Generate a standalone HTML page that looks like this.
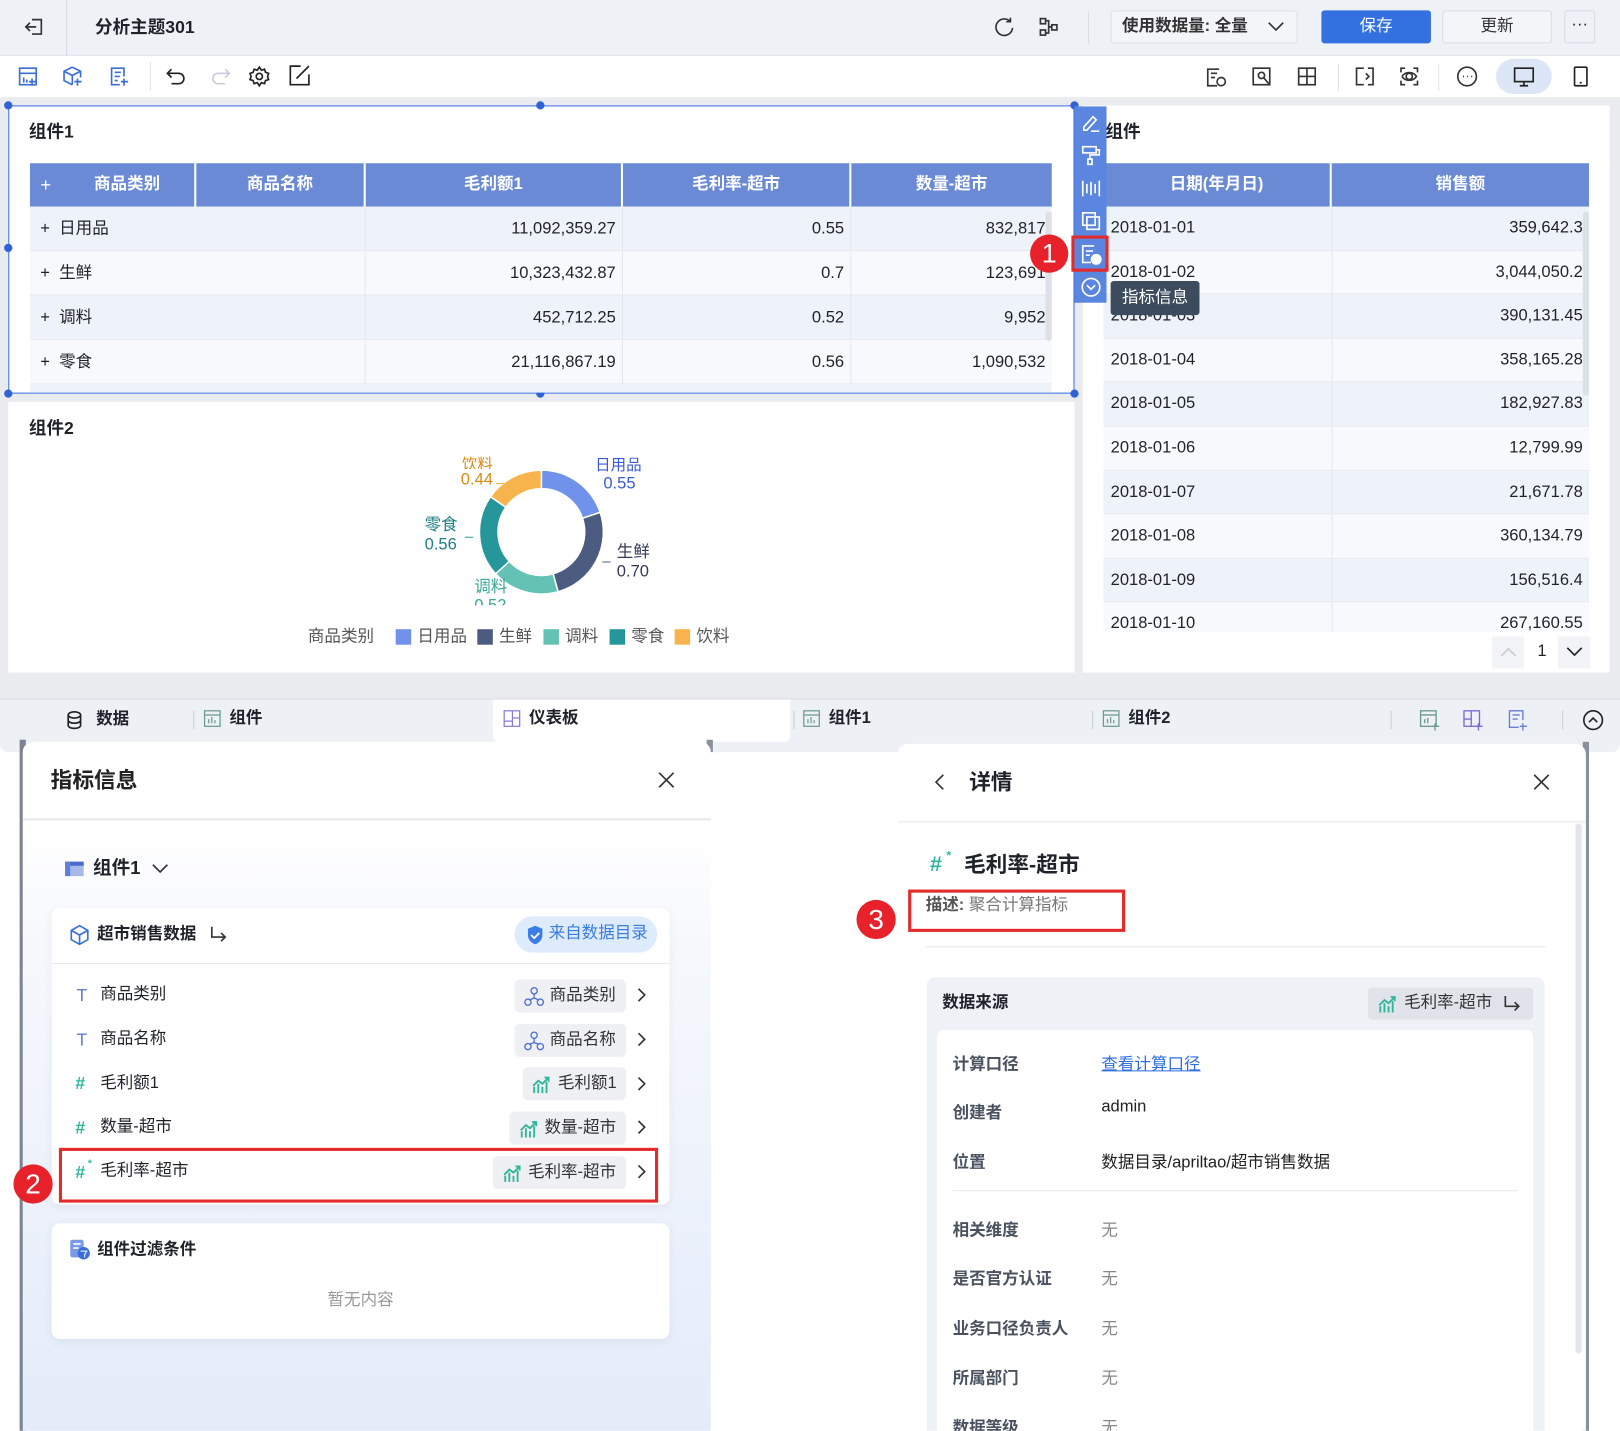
<!DOCTYPE html>
<html><head><meta charset="utf-8"><style>
*{box-sizing:border-box;margin:0;padding:0}
html,body{width:1620px;height:1431px;overflow:hidden;background:#fff}
body{font-family:"Liberation Sans","Noto Sans CJK SC",sans-serif;color:#1f2329}
#w{position:absolute;left:0;top:0;width:1568px;height:1385px;transform:scale(1.03316);transform-origin:0 0;overflow:hidden;background:#fff}
.a{position:absolute}
.t{position:absolute;white-space:nowrap;line-height:1}
.b{font-weight:bold}
.ic{position:absolute;fill:none;stroke:#3a6fd8;stroke-width:1.6}
.z{z-index:5}
.row{position:absolute;left:29px;width:989px;height:43px;border-bottom:1px solid #e6eaf0}
.cell{position:absolute;top:0;height:100%;border-right:1px solid #e3e8f0;font-size:16px;line-height:43px;padding:0 6px;text-align:right}
.tag{position:absolute;height:32px;background:#eef0f3;border-radius:5px;font-size:16px;line-height:32px;color:#333;padding:0 8px 0 34px}
.lab{position:absolute;left:922px;font-size:16px;font-weight:bold;color:#4a5260}
.val{position:absolute;left:1066px;font-size:16px;color:#222}
.gv{color:#888}
</style></head><body><div id="w">
<!-- top bar -->
<div class="a" style="left:0;top:0;width:1568px;height:54px;background:#eef1f6;border-bottom:1px solid #e0e4ea"></div>
<svg class="ic" style="left:22px;top:15px;stroke:#333" width="22" height="22"><path d="M9 4h9v14H9M3 11h10M7 7l-4 4 4 4"/></svg>
<div class="a" style="left:64px;top:0;width:1px;height:54px;background:#d8dce3"></div>
<div class="t b" style="left:92px;top:18px;font-size:17px">分析主题301</div>
<svg class="ic" style="left:961px;top:15px;stroke:#333" width="22" height="22"><path d="M17 6a8 8 0 1 0 2 6M17 2v4h-4"/></svg>
<svg class="ic" style="left:1004px;top:15px;stroke:#333" width="22" height="22"><rect x="3" y="3" width="5" height="5"/><rect x="3" y="14" width="5" height="5"/><rect x="14" y="9" width="5" height="5"/><path d="M8 5h3v12H8M11 11h3"/></svg>
<div class="a" style="left:1053px;top:12px;width:1px;height:30px;background:#d8dce3"></div>
<div class="a" style="left:1075px;top:10px;width:181px;height:32px;background:#f3f5f8;border:1px solid #dde1e7;border-radius:3px"></div>
<div class="t b" style="left:1086px;top:18px;font-size:16px;color:#333">使用数据量: 全量</div>
<svg class="ic" style="left:1226px;top:18px;stroke:#333" width="18" height="16"><path d="M2 4l7 7 7-7"/></svg>
<div class="a" style="left:1279px;top:10px;width:106px;height:32px;background:#3370e0;border-radius:3px;color:#fff;font-size:16px;line-height:32px;text-align:center">保存</div>
<div class="a" style="left:1396px;top:10px;width:106px;height:32px;background:#f3f5f8;border:1px solid #d8dce3;border-radius:3px;font-size:16px;line-height:30px;text-align:center;color:#333">更新</div>
<div class="a" style="left:1514px;top:10px;width:30px;height:32px;border:1px solid #d8dce3;border-radius:3px;font-size:16px;line-height:26px;text-align:center">···</div>
<!-- toolbar -->
<svg class="ic" style="left:17px;top:63px" width="22" height="22"><rect x="2" y="3" width="16" height="16"/><path d="M2 8h16M6 12v5M9 14v3M14 13v7M11 16h7"/></svg>
<svg class="ic" style="left:60px;top:63px" width="22" height="22"><path d="M10 2l8 4v6M10 2L2 6v9l8 4M2 6l8 4 8-4M10 10v9M15 13v7M12 16h7"/></svg>
<svg class="ic" style="left:104px;top:63px" width="22" height="22"><path d="M16 11V3H4v16h8M7 7h6M7 11h5M7 15h3M16 13v7M13 16h7"/></svg>
<div class="a" style="left:145px;top:60px;width:1px;height:28px;background:#e0e4ea"></div>
<svg class="ic" style="left:160px;top:63px;stroke:#222" width="22" height="22"><path d="M6 4L2 8l4 4M2 8h11a5 5 0 0 1 0 10H6"/></svg>
<svg class="ic" style="left:202px;top:63px;stroke:#ccd" width="22" height="22"><path d="M16 4l4 4-4 4M20 8H9a5 5 0 0 0 0 10h7"/></svg>
<svg class="ic" style="left:240px;top:63px;stroke:#222" width="22" height="22"><circle cx="11" cy="11" r="3"/><path d="M11 2l2 3 3-1 1 3 3 1-1 3 1 3-3 1-1 3-3-1-2 3-2-3-3 1-1-3-3-1 1-3-1-3 3-1 1-3 3 1z"/></svg>
<svg class="ic" style="left:279px;top:62px;stroke:#222" width="22" height="22"><path d="M12 2H2v18h18V10M8 14L20 2"/></svg>
<svg class="ic" style="left:1166px;top:63px;stroke:#333" width="22" height="22"><path d="M14 4H3v16h9M6 8h6M6 12h4"/><circle cx="16" cy="16" r="4"/></svg>
<svg class="ic" style="left:1210px;top:63px;stroke:#333" width="22" height="22"><rect x="3" y="3" width="16" height="16"/><circle cx="11" cy="10" r="3"/><path d="M13 12l5 6"/></svg>
<svg class="ic" style="left:1254px;top:63px;stroke:#333" width="22" height="22"><rect x="3" y="3" width="16" height="16"/><path d="M11 3v16M3 11h16"/></svg>
<div class="a" style="left:1295px;top:62px;width:1px;height:26px;background:#e0e4ea"></div>
<svg class="ic" style="left:1310px;top:63px;stroke:#333" width="22" height="22"><path d="M10 3H3v16h7M14 3h5v16h-5M12 8l3 3-3 3"/></svg>
<svg class="ic" style="left:1353px;top:63px;stroke:#333" width="22" height="22"><path d="M3 7V3h4M15 3h4v4M19 15v4h-4M7 19H3v-4"/><circle cx="11" cy="11" r="3"/><path d="M4 11c3-5 11-5 14 0c-3 5-11 5-14 0"/></svg>
<div class="a" style="left:1392px;top:62px;width:1px;height:26px;background:#e0e4ea"></div>
<svg class="ic" style="left:1409px;top:63px;stroke:#333" width="22" height="22"><circle cx="11" cy="11" r="9"/><path d="M7 11h1M11 11h1M15 11h1"/></svg>
<div class="a" style="left:1448px;top:57px;width:54px;height:34px;background:#dce6f6;border-radius:17px"></div>
<svg class="ic" style="left:1464px;top:63px;stroke:#222" width="22" height="22"><rect x="2" y="3" width="18" height="13"/><path d="M7 20h8M11 16v4"/></svg>
<svg class="ic" style="left:1519px;top:63px;stroke:#222" width="22" height="22"><rect x="5" y="2" width="12" height="18" rx="1"/><path d="M10 17h2"/></svg>
<!-- canvas -->
<div class="a" style="left:0;top:94px;width:1568px;height:582px;background:#e9ebef"></div>
<!-- comp1 -->
<div class="a" style="left:8px;top:102px;width:1032px;height:279px;background:#fff;border:1px solid #3b6fe0"></div>
<div class="a" style="left:4px;top:98px;width:8px;height:8px;border-radius:4px;background:#2f62d6"></div>
<div class="a" style="left:519px;top:98px;width:8px;height:8px;border-radius:4px;background:#2f62d6"></div>
<div class="a z" style="left:1036px;top:98px;width:8px;height:8px;border-radius:4px;background:#2f62d6"></div>
<div class="a" style="left:4px;top:236px;width:8px;height:8px;border-radius:4px;background:#2f62d6"></div>
<div class="a" style="left:4px;top:377px;width:8px;height:8px;border-radius:4px;background:#2f62d6"></div>
<div class="a" style="left:519px;top:377px;width:8px;height:8px;border-radius:4px;background:#2f62d6"></div>
<div class="a" style="left:1036px;top:377px;width:8px;height:8px;border-radius:4px;background:#2f62d6"></div>
<div class="t b" style="left:28px;top:119px;font-size:17px">组件1</div>
<div class="a" style="left:29px;top:158px;width:989px;height:42px;background:#6a8ad6;color:#fff;font-weight:bold;font-size:16px;line-height:42px">
 <div class="a" style="left:0;width:161px;height:42px;border-right:2px solid #fff"><span style="position:absolute;left:10px;font-weight:normal;font-size:18px">+</span><span style="position:absolute;left:62px">商品类别</span></div>
 <div class="a" style="left:161px;width:164px;height:42px;border-right:2px solid #fff;text-align:center">商品名称</div>
 <div class="a" style="left:325px;width:249px;height:42px;border-right:2px solid #fff;text-align:center">毛利额1</div>
 <div class="a" style="left:574px;width:221px;height:42px;border-right:2px solid #fff;text-align:center">毛利率-超市</div>
 <div class="a" style="left:795px;width:194px;height:42px;text-align:center">数量-超市</div>
</div>
<div class="row" style="top:200px;background:#eef2f9"><div class="cell" style="left:0;width:325px;text-align:left;padding-left:10px">+&nbsp; 日用品</div><div class="cell" style="left:325px;width:249px">11,092,359.27</div><div class="cell" style="left:574px;width:221px">0.55</div><div class="cell" style="left:795px;width:194px;border:0">832,817</div></div>
<div class="row" style="top:243px;background:#f8f9fc"><div class="cell" style="left:0;width:325px;text-align:left;padding-left:10px">+&nbsp; 生鲜</div><div class="cell" style="left:325px;width:249px">10,323,432.87</div><div class="cell" style="left:574px;width:221px">0.7</div><div class="cell" style="left:795px;width:194px;border:0">123,691</div></div>
<div class="row" style="top:286px;background:#eef2f9"><div class="cell" style="left:0;width:325px;text-align:left;padding-left:10px">+&nbsp; 调料</div><div class="cell" style="left:325px;width:249px">452,712.25</div><div class="cell" style="left:574px;width:221px">0.52</div><div class="cell" style="left:795px;width:194px;border:0">9,952</div></div>
<div class="row" style="top:329px;background:#f8f9fc"><div class="cell" style="left:0;width:325px;text-align:left;padding-left:10px">+&nbsp; 零食</div><div class="cell" style="left:325px;width:249px">21,116,867.19</div><div class="cell" style="left:574px;width:221px">0.56</div><div class="cell" style="left:795px;width:194px;border:0">1,090,532</div></div>
<div class="a" style="left:29px;top:372px;width:989px;height:8px;background:#eef2f9"></div>
<div class="a" style="left:1012px;top:205px;width:6px;height:125px;background:#dde1e7;border-radius:3px"></div>
<!-- right comp -->
<div class="a" style="left:1048px;top:102px;width:510px;height:549px;background:#fff"></div>
<div class="t b" style="left:1070px;top:119px;font-size:17px">组件</div>
<div class="a" style="left:1068px;top:158px;width:470px;height:42px;background:#6a8ad6;color:#fff;font-weight:bold;font-size:16px;line-height:42px"><div class="a" style="left:0;width:221px;height:42px;border-right:2px solid #fff;text-align:center">日期(年月日)</div><div class="a" style="left:221px;width:249px;height:42px;text-align:center">销售额</div></div>
<div class="a" style="left:1068px;top:200px;width:470px;height:412px;overflow:hidden;font-size:16px">
<div style="height:42.6px;line-height:42px;background:#eef2f9;position:relative;border-bottom:1px solid #e6eaf0"><span class="a" style="left:7px">2018-01-01</span><span class="a" style="right:6px">359,642.3</span><span class="a" style="left:221px;top:0;width:1px;height:42px;background:#e3e8f0"></span></div>
<div style="height:42.6px;line-height:42px;background:#f8f9fc;position:relative;border-bottom:1px solid #e6eaf0"><span class="a" style="left:7px">2018-01-02</span><span class="a" style="right:6px">3,044,050.2</span><span class="a" style="left:221px;top:0;width:1px;height:42px;background:#e3e8f0"></span></div>
<div style="height:42.6px;line-height:42px;background:#eef2f9;position:relative;border-bottom:1px solid #e6eaf0"><span class="a" style="left:7px">2018-01-03</span><span class="a" style="right:6px">390,131.45</span><span class="a" style="left:221px;top:0;width:1px;height:42px;background:#e3e8f0"></span></div>
<div style="height:42.6px;line-height:42px;background:#f8f9fc;position:relative;border-bottom:1px solid #e6eaf0"><span class="a" style="left:7px">2018-01-04</span><span class="a" style="right:6px">358,165.28</span><span class="a" style="left:221px;top:0;width:1px;height:42px;background:#e3e8f0"></span></div>
<div style="height:42.6px;line-height:42px;background:#eef2f9;position:relative;border-bottom:1px solid #e6eaf0"><span class="a" style="left:7px">2018-01-05</span><span class="a" style="right:6px">182,927.83</span><span class="a" style="left:221px;top:0;width:1px;height:42px;background:#e3e8f0"></span></div>
<div style="height:42.6px;line-height:42px;background:#f8f9fc;position:relative;border-bottom:1px solid #e6eaf0"><span class="a" style="left:7px">2018-01-06</span><span class="a" style="right:6px">12,799.99</span><span class="a" style="left:221px;top:0;width:1px;height:42px;background:#e3e8f0"></span></div>
<div style="height:42.6px;line-height:42px;background:#eef2f9;position:relative;border-bottom:1px solid #e6eaf0"><span class="a" style="left:7px">2018-01-07</span><span class="a" style="right:6px">21,671.78</span><span class="a" style="left:221px;top:0;width:1px;height:42px;background:#e3e8f0"></span></div>
<div style="height:42.6px;line-height:42px;background:#f8f9fc;position:relative;border-bottom:1px solid #e6eaf0"><span class="a" style="left:7px">2018-01-08</span><span class="a" style="right:6px">360,134.79</span><span class="a" style="left:221px;top:0;width:1px;height:42px;background:#e3e8f0"></span></div>
<div style="height:42.6px;line-height:42px;background:#eef2f9;position:relative;border-bottom:1px solid #e6eaf0"><span class="a" style="left:7px">2018-01-09</span><span class="a" style="right:6px">156,516.4</span><span class="a" style="left:221px;top:0;width:1px;height:42px;background:#e3e8f0"></span></div>
<div style="height:42.6px;line-height:42px;background:#f8f9fc;position:relative"><span class="a" style="left:7px">2018-01-10</span><span class="a" style="right:6px">267,160.55</span><span class="a" style="left:221px;top:0;width:1px;height:42px;background:#e3e8f0"></span></div>
</div>
<div class="a" style="left:1532px;top:205px;width:6px;height:178px;background:#dde1e7;border-radius:3px"></div>
<!-- vertical toolbar (on top) -->
<div class="a z" style="left:1040px;top:103px;width:31px;height:190px;background:#5b86e0"></div>
<svg class="ic z" style="left:1045px;top:108px;stroke:#fff" width="22" height="22"><path d="M4 15l9-10 3 3-9 10H4zM11 19h8"/></svg>
<svg class="ic z" style="left:1045px;top:139px;stroke:#fff" width="22" height="22"><rect x="3" y="3" width="13" height="6"/><path d="M16 6h3v5h-9v4M8 15h4v5H8z"/></svg>
<svg class="ic z" style="left:1045px;top:171px;stroke:#fff" width="22" height="22"><path d="M3 4v15M19 4v15M7 7v9M11 5v13M15 7v9"/></svg>
<svg class="ic z" style="left:1045px;top:203px;stroke:#fff" width="22" height="22"><rect x="3" y="3" width="12" height="12"/><rect x="7" y="7" width="12" height="12"/></svg>
<div class="a z" style="left:1037px;top:228px;width:36px;height:35px;border:3px solid #e52a2a"></div>
<svg class="ic z" style="left:1045px;top:235px;stroke:#fff" width="22" height="22"><path d="M14 3H3v16h8M6 8h7M6 12h4"/><circle cx="16" cy="16" r="4.5" fill="#fff"/></svg>
<svg class="ic z" style="left:1045px;top:267px;stroke:#fff" width="22" height="22"><circle cx="11" cy="11" r="8.5"/><path d="M7 9l4 4 4-4"/></svg>
<div class="a z" style="left:997px;top:227px;width:37px;height:37px;border-radius:50%;background:#e8222a;color:#fff;font-size:26px;line-height:37px;text-align:center">1</div>
<div class="a z" style="left:1075px;top:272px;width:86px;height:33px;background:#3d4b5e;border-radius:3px;color:#fff;font-size:16px;line-height:33px;text-align:center">指标信息</div>
<div class="a" style="left:1444px;top:616px;width:31px;height:31px;background:#f1f3f6"></div>
<svg class="ic" style="left:1451px;top:624px;stroke:#ccc" width="18" height="14"><path d="M2 11l7-7 7 7"/></svg>
<div class="t" style="left:1488px;top:623px;font-size:16px">1</div>
<div class="a" style="left:1508px;top:616px;width:31px;height:31px;background:#f1f3f6"></div>
<svg class="ic" style="left:1515px;top:624px;stroke:#222" width="18" height="14"><path d="M2 3l7 7 7-7"/></svg>
<!-- comp2 -->
<div class="a" style="left:8px;top:389px;width:1032px;height:262px;background:#fff"></div>
<div class="t b" style="left:28px;top:406px;font-size:17px">组件2</div>
<svg class="a" style="left:400px;top:440px" width="240" height="150">
<g transform="translate(124,75)" stroke="#fff" stroke-width="1.5">
<path d="M0-60A60 60 0 0 1 56.9-19.1L39.8-13.4A42 42 0 0 0 0-42Z" fill="#7092ea"/>
<path d="M56.9-19.1A60 60 0 0 1 16.2 57.8L11.3 40.4A42 42 0 0 0 39.8-13.4Z" fill="#4c5b80"/>
<path d="M16.2 57.8A60 60 0 0 1-44.3 40.4L-31 28.3A42 42 0 0 0 11.3 40.4Z" fill="#64c2b4"/>
<path d="M-44.3 40.4A60 60 0 0 1-49.2-34.3L-34.4-24A42 42 0 0 0-31 28.3Z" fill="#25979b"/>
<path d="M-49.2-34.3A60 60 0 0 1 0-60L0-42A42 42 0 0 0-34.4-24Z" fill="#f8b44c"/>
</g>
<g stroke-width="1" fill="none"><path d="M165 43h8" stroke="#7092ea"/><path d="M183 104h8" stroke="#4c5b80"/><path d="M50 80h8" stroke="#25979b"/><path d="M80 28h8" stroke="#f8b44c"/></g>
</svg>
<div class="t" style="left:576px;top:443px;font-size:15px;color:#3a5ad8;height:14px;overflow:hidden">日用品</div>
<div class="t" style="left:584px;top:461px;font-size:16px;color:#3a5ad8">0.55</div>
<div class="t" style="left:597px;top:527px;font-size:16px;color:#333a55">生鲜</div>
<div class="t" style="left:597px;top:546px;font-size:16px;color:#333a55">0.70</div>
<div class="t" style="left:411px;top:501px;font-size:16px;color:#1e7f84">零食</div>
<div class="t" style="left:411px;top:520px;font-size:16px;color:#1e7f84">0.56</div>
<div class="t" style="left:447px;top:442px;font-size:15px;color:#d88a10;height:12px;overflow:hidden">饮料</div>
<div class="t" style="left:446px;top:457px;font-size:16px;color:#d88a10">0.44</div>
<div class="t" style="left:459px;top:561px;font-size:16px;color:#3aa898">调料</div>
<div class="t" style="left:459px;top:579px;font-size:16px;color:#3aa898;height:7px;overflow:hidden">0.52</div>
<div class="t" style="left:298px;top:609px;font-size:16px;color:#555">商品类别</div>
<div class="a" style="left:383px;top:609px;width:15px;height:15px;background:#7092ea"></div><div class="t" style="left:404px;top:609px;font-size:16px;color:#555">日用品</div>
<div class="a" style="left:462px;top:609px;width:15px;height:15px;background:#4c5b80"></div><div class="t" style="left:483px;top:609px;font-size:16px;color:#555">生鲜</div>
<div class="a" style="left:526px;top:609px;width:15px;height:15px;background:#64c2b4"></div><div class="t" style="left:547px;top:609px;font-size:16px;color:#555">调料</div>
<div class="a" style="left:590px;top:609px;width:15px;height:15px;background:#25979b"></div><div class="t" style="left:611px;top:609px;font-size:16px;color:#555">零食</div>
<div class="a" style="left:653px;top:609px;width:15px;height:15px;background:#f8b44c"></div><div class="t" style="left:674px;top:609px;font-size:16px;color:#555">饮料</div>
<!-- tab bar -->
<div class="a" style="left:0;top:676px;width:1568px;height:52px;background:#edf0f5;border-top:1px solid #d8dce3;border-radius:0 0 8px 8px"></div>
<div class="a" style="left:477px;top:677px;width:288px;height:41px;background:#fff;border-radius:0 0 6px 6px"></div>
<svg class="ic" style="left:62px;top:687px;stroke:#222" width="20" height="20"><ellipse cx="10" cy="5" rx="6" ry="3"/><path d="M4 5v10c0 4 12 4 12 0V5M4 10c0 4 12 4 12 0"/></svg>
<div class="t b" style="left:93px;top:689px;font-size:16px">数据</div>
<div class="a" style="left:187px;top:688px;width:1px;height:18px;background:#ccd"></div>
<svg class="ic" style="left:197px;top:687px;stroke:#6a9a90;stroke-width:1.2" width="18" height="18"><rect x="1" y="1" width="15" height="15"/><path d="M1 5h15M5 13V9M8 13V7M11 13v-3"/></svg>
<div class="t b" style="left:222px;top:688px;font-size:16px">组件</div>
<svg class="ic" style="left:487px;top:687px;stroke:#8a7ad8;stroke-width:1.2" width="18" height="18"><rect x="1" y="1" width="15" height="15"/><path d="M9 1v15M9 8h7M1 11h8"/></svg>
<div class="t b" style="left:512px;top:688px;font-size:16px">仪表板</div>
<div class="a" style="left:768px;top:688px;width:1px;height:18px;background:#ccd"></div>
<svg class="ic" style="left:777px;top:687px;stroke:#6a9a90;stroke-width:1.2" width="18" height="18"><rect x="1" y="1" width="15" height="15"/><path d="M1 5h15M5 13V9M8 13V7M11 13v-3"/></svg>
<div class="t b" style="left:802px;top:688px;font-size:16px">组件1</div>
<div class="a" style="left:1057px;top:688px;width:1px;height:18px;background:#ccd"></div>
<svg class="ic" style="left:1067px;top:687px;stroke:#6a9a90;stroke-width:1.2" width="18" height="18"><rect x="1" y="1" width="15" height="15"/><path d="M1 5h15M5 13V9M8 13V7M11 13v-3"/></svg>
<div class="t b" style="left:1092px;top:688px;font-size:16px">组件2</div>
<div class="a" style="left:1346px;top:688px;width:1px;height:18px;background:#ccd"></div>
<svg class="ic" style="left:1373px;top:686px;stroke:#6a9a90;stroke-width:1.3" width="22" height="22"><rect x="2" y="2" width="15" height="15"/><path d="M2 6h15M6 14v-4M9 14V9M16 14v7M13 17h7"/></svg>
<svg class="ic" style="left:1415px;top:686px;stroke:#7a6ad8;stroke-width:1.3" width="22" height="22"><rect x="2" y="2" width="15" height="15"/><path d="M9 2v15M2 10h7M16 14v7M13 17h7"/></svg>
<svg class="ic" style="left:1458px;top:686px;stroke:#6a7ad8;stroke-width:1.3" width="22" height="22"><path d="M16 11V2H3v16h9M6 6h7M6 10h5M16 14v7M13 17h7"/></svg>
<div class="a" style="left:1512px;top:688px;width:1px;height:18px;background:#ccd"></div>
<svg class="ic" style="left:1531px;top:686px;stroke:#222" width="22" height="22"><circle cx="11" cy="11" r="9"/><path d="M7 13l4-4 4 4"/></svg>
<!-- behind strips -->
<div class="a" style="left:19px;top:716px;width:6px;height:669px;background:#7c8494"></div>
<div class="a" style="left:684px;top:716px;width:6px;height:12px;background:#8a909c"></div>
<div class="a" style="left:1532px;top:718px;width:6px;height:667px;background:#8a909c"></div>
<!-- left panel -->
<div class="a" style="left:22px;top:718px;width:666px;height:667px;border-radius:10px 10px 0 0;background:linear-gradient(#fff 0,#fff 80px,#f6f8fc 200px,#e4ecfa 100%)"></div>
<div class="t b" style="left:49px;top:745px;font-size:21px;color:#222">指标信息</div>
<svg class="ic" style="left:636px;top:746px;stroke:#333" width="18" height="18"><path d="M2 2l14 14M16 2L2 16"/></svg>
<div class="a" style="left:22px;top:792px;width:666px;height:2px;background:#e6e8ec"></div>
<svg class="a" style="left:62px;top:832px" width="20" height="18"><rect x="1" y="2" width="18" height="14" fill="#a8b8e8"/><rect x="1" y="2" width="18" height="4" fill="#4a6ad0"/><rect x="1" y="2" width="5" height="14" fill="#6080d8"/></svg>
<div class="t b" style="left:90px;top:831px;font-size:18px">组件1</div>
<svg class="ic" style="left:146px;top:834px;stroke:#333" width="18" height="14"><path d="M2 3l7 7 7-7"/></svg>
<div class="a" style="left:50px;top:879px;width:598px;height:287px;background:#fff;border-radius:8px;box-shadow:0 2px 8px rgba(60,80,120,.08)"></div>
<svg class="ic" style="left:66px;top:894px;stroke:#3a6fd8" width="22" height="22"><path d="M11 2l8 4.5v9L11 20l-8-4.5v-9zM3 6.5l8 4.5 8-4.5M11 11v9"/></svg>
<div class="t b" style="left:94px;top:897px;font-size:16px">超市销售数据</div>
<svg class="ic" style="left:202px;top:895px;stroke:#333" width="20" height="20"><path d="M3 2v10h13M12 8l4 4-4 4"/></svg>
<div class="a" style="left:498px;top:887px;width:138px;height:35px;background:#deebfc;border-radius:18px"></div>
<svg class="a" style="left:509px;top:895px" width="18" height="20"><path d="M9 1l7 3v6c0 5-4 8-7 9-3-1-7-4-7-9V4z" fill="#3a7de8"/><path d="M5 10l3 3 5-5" stroke="#fff" stroke-width="1.8" fill="none"/></svg>
<div class="t" style="left:531px;top:896px;font-size:16px;color:#3a7de0">来自数据目录</div>
<div class="a" style="left:50px;top:932px;width:598px;height:1px;background:#e6e8ec"></div>
<div class="t" style="left:74px;top:955px;font-size:17px;color:#5b7fd6">T</div><div class="t" style="left:97px;top:955px;font-size:16px">商品类别</div>
<div class="tag" style="left:498px;top:948px;width:108px">商品类别</div>
<svg class="ic" style="left:507px;top:955px;stroke:#5070d0;stroke-width:1.3" width="20" height="20"><circle cx="10" cy="4" r="3"/><circle cx="4" cy="15" r="3"/><circle cx="16" cy="15" r="3"/><path d="M10 7v4l-5 2M10 11l5 2"/></svg>
<div class="t" style="left:74px;top:998px;font-size:17px;color:#5b7fd6">T</div><div class="t" style="left:97px;top:998px;font-size:16px">商品名称</div>
<div class="tag" style="left:498px;top:991px;width:108px">商品名称</div>
<svg class="ic" style="left:507px;top:998px;stroke:#5070d0;stroke-width:1.3" width="20" height="20"><circle cx="10" cy="4" r="3"/><circle cx="4" cy="15" r="3"/><circle cx="16" cy="15" r="3"/><path d="M10 7v4l-5 2M10 11l5 2"/></svg>
<div class="t b" style="left:73px;top:1040px;font-size:17px;color:#2fb59a">#</div><div class="t" style="left:97px;top:1041px;font-size:16px">毛利额1</div>
<div class="tag" style="left:506px;top:1033px;width:100px">毛利额1</div>
<div class="t b" style="left:73px;top:1083px;font-size:17px;color:#2fb59a">#</div><div class="t" style="left:97px;top:1083px;font-size:16px">数量-超市</div>
<div class="tag" style="left:493px;top:1076px;width:113px">数量-超市</div>
<div class="t b" style="left:73px;top:1126px;font-size:17px;color:#2fb59a">#</div><div class="t b" style="left:85px;top:1122px;font-size:10px;color:#2fb59a">*</div><div class="t" style="left:97px;top:1126px;font-size:16px">毛利率-超市</div>
<div class="tag" style="left:477px;top:1119px;width:129px">毛利率-超市</div>
<svg class="a" style="left:514px;top:1040px" width="20" height="20"><path d="M3 18v-6M7 18v-9M11 18v-6M15 18V7M2 11l5-5 4 3 6-6M13 3h4v4" stroke="#2fb59a" stroke-width="1.8" fill="none"/></svg>
<svg class="a" style="left:502px;top:1083px" width="20" height="20"><path d="M3 18v-6M7 18v-9M11 18v-6M15 18V7M2 11l5-5 4 3 6-6M13 3h4v4" stroke="#2fb59a" stroke-width="1.8" fill="none"/></svg>
<svg class="a" style="left:486px;top:1126px" width="20" height="20"><path d="M3 18v-6M7 18v-9M11 18v-6M15 18V7M2 11l5-5 4 3 6-6M13 3h4v4" stroke="#2fb59a" stroke-width="1.8" fill="none"/></svg>
<svg class="ic" style="left:615px;top:955px;stroke:#333" width="14" height="190"><path d="M3 2l6 6-6 6M3 45l6 6-6 6M3 88l6 6-6 6M3 130l6 6-6 6M3 173l6 6-6 6"/></svg>
<div class="a" style="left:57px;top:1111px;width:580px;height:53px;border:3px solid #e52a2a"></div>
<div class="a" style="left:13px;top:1127px;width:38px;height:38px;border-radius:50%;background:#e8222a;color:#fff;font-size:27px;line-height:38px;text-align:center">2</div>
<div class="a" style="left:50px;top:1184px;width:598px;height:112px;background:#fff;border-radius:8px;box-shadow:0 2px 8px rgba(60,80,120,.08)"></div>
<svg class="a" style="left:66px;top:1198px" width="22" height="22"><rect x="2" y="2" width="13" height="17" rx="2" fill="#7a9ae8"/><path d="M5 6h7M5 10h5" stroke="#fff" stroke-width="1.5"/><circle cx="15" cy="15" r="6" fill="#3a6fd8"/><path d="M12 13h6l-2 3v3" stroke="#fff" fill="none"/></svg>
<div class="t b" style="left:94px;top:1202px;font-size:16px">组件过滤条件</div>
<div class="t" style="left:317px;top:1251px;font-size:16px;color:#999">暂无内容</div>
<!-- right panel -->
<div class="a" style="left:869px;top:720px;width:666px;height:665px;background:#fff;border-radius:10px 10px 0 0"></div>
<svg class="ic" style="left:903px;top:748px;stroke:#333" width="14" height="18"><path d="M10 2L3 9l7 7"/></svg>
<div class="t b" style="left:938px;top:747px;font-size:21px">详情</div>
<svg class="ic" style="left:1483px;top:748px;stroke:#333" width="18" height="18"><path d="M2 2l14 14M16 2L2 16"/></svg>
<div class="a" style="left:869px;top:795px;width:666px;height:1px;background:#e6e8ec"></div>
<div class="a" style="left:1525px;top:797px;width:6px;height:513px;background:#e2e5ea;border-radius:3px"></div>
<div class="t b" style="left:900px;top:826px;font-size:21px;color:#2fb59a">#</div><div class="t b" style="left:916px;top:822px;font-size:12px;color:#2fb59a">*</div>
<div class="t b" style="left:933px;top:827px;font-size:21px">毛利率-超市</div>
<div class="a" style="left:879px;top:861px;width:210px;height:41px;border:3px solid #e52a2a"></div>
<div class="t" style="left:896px;top:869px;font-size:16px;color:#777"><b style="color:#555">描述:</b> 聚合计算指标</div>
<div class="a" style="left:829px;top:871px;width:38px;height:38px;border-radius:50%;background:#e8222a;color:#fff;font-size:27px;line-height:38px;text-align:center">3</div>
<div class="a" style="left:896px;top:916px;width:600px;height:1px;background:#e6e8ec"></div>
<div class="a" style="left:897px;top:946px;width:598px;height:439px;background:#eef1f6;border-radius:8px 8px 0 0"></div>
<div class="t b" style="left:912px;top:963px;font-size:16px">数据来源</div>
<div class="a" style="left:1324px;top:956px;width:160px;height:31px;background:#e0e4ea;border-radius:4px"></div>
<svg class="a" style="left:1333px;top:962px" width="20" height="20"><path d="M3 18v-6M7 18v-9M11 18v-6M15 18V7M2 11l5-5 4 3 6-6M13 3h4v4" stroke="#2fb59a" stroke-width="1.8" fill="none"/></svg>
<div class="t" style="left:1359px;top:963px;font-size:16px;color:#333">毛利率-超市</div>
<svg class="ic" style="left:1454px;top:962px;stroke:#333" width="20" height="20"><path d="M3 2v10h13M12 8l4 4-4 4"/></svg>
<div class="a" style="left:907px;top:997px;width:577px;height:388px;background:#fff;border-radius:6px 6px 0 0"></div>
<div class="lab" style="top:1016px">计算口径</div><div class="val" style="top:1016px;color:#2f6fe0;text-decoration:underline">查看计算口径</div>
<div class="lab" style="top:1063px">创建者</div><div class="val" style="top:1063px">admin</div>
<div class="lab" style="top:1111px">位置</div><div class="val" style="top:1111px">数据目录/apriltao/超市销售数据</div>
<div class="a" style="left:922px;top:1152px;width:547px;height:1px;background:#e6e8ec"></div>
<div class="lab" style="top:1177px">相关维度</div><div class="val gv" style="top:1177px">无</div>
<div class="lab" style="top:1224px">是否官方认证</div><div class="val gv" style="top:1224px">无</div>
<div class="lab" style="top:1272px">业务口径负责人</div><div class="val gv" style="top:1272px">无</div>
<div class="lab" style="top:1320px">所属部门</div><div class="val gv" style="top:1320px">无</div>
<div class="lab" style="top:1368px">数据等级</div><div class="val gv" style="top:1368px">无</div>
</div></body></html>
